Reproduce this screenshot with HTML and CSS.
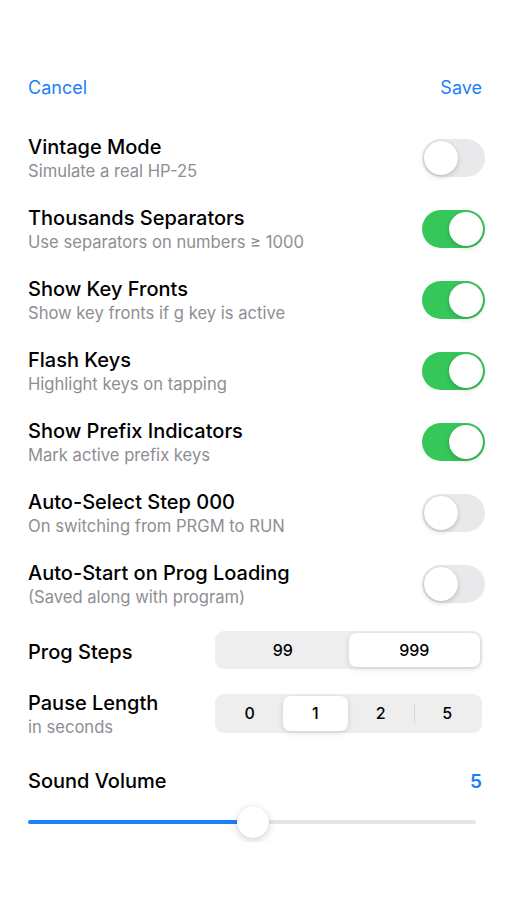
FILE: index.html
```html
<!DOCTYPE html>
<html>
<head>
	<title>Settings</title>
	<link rel="stylesheet" href="styles.css">
</head>
<body>
<div class="page">

	<div class="nav">
		<span class="nav_btn">Cancel</span>
		<span class="nav_btn">Save</span>
	</div>

	<div class="row">
		<div class="texts">
			<div class="title">Vintage Mode</div>
			<div class="sub">Simulate a real HP-25</div>
		</div>
		<div class="toggle"><div class="knob"></div></div>
	</div>

	<div class="row">
		<div class="texts">
			<div class="title">Thousands Separators</div>
			<div class="sub">Use separators on numbers &ge; 1000</div>
		</div>
		<div class="toggle on"><div class="knob"></div></div>
	</div>

	<div class="row">
		<div class="texts">
			<div class="title">Show Key Fronts</div>
			<div class="sub">Show key fronts if g key is active</div>
		</div>
		<div class="toggle on"><div class="knob"></div></div>
	</div>

	<div class="row">
		<div class="texts">
			<div class="title">Flash Keys</div>
			<div class="sub">Highlight keys on tapping</div>
		</div>
		<div class="toggle on"><div class="knob"></div></div>
	</div>

	<div class="row">
		<div class="texts">
			<div class="title">Show Prefix Indicators</div>
			<div class="sub">Mark active prefix keys</div>
		</div>
		<div class="toggle on"><div class="knob"></div></div>
	</div>

	<div class="row">
		<div class="texts">
			<div class="title">Auto-Select Step 000</div>
			<div class="sub">On switching from PRGM to RUN</div>
		</div>
		<div class="toggle"><div class="knob"></div></div>
	</div>

	<div class="row">
		<div class="texts">
			<div class="title">Auto-Start on Prog Loading</div>
			<div class="sub">(Saved along with program)</div>
		</div>
		<div class="toggle"><div class="knob"></div></div>
	</div>

	<div class="row seg_row steps_row">
		<div class="texts">
			<div class="title">Prog Steps</div>
		</div>
		<div class="segmented">
			<div class="seg">99</div>
			<div class="seg selected">999</div>
		</div>
	</div>

	<div class="row seg_row pause_row">
		<div class="texts">
			<div class="title">Pause Length</div>
			<div class="sub">in seconds</div>
		</div>
		<div class="segmented">
			<div class="seg">0</div>
			<div class="seg selected">1</div>
			<div class="seg">2</div>
			<div class="seg divided">5</div>
		</div>
	</div>

	<div class="volume">
		<div class="title">Sound Volume</div>
		<div class="volume_value">5</div>
	</div>

	<div class="slider">
		<div class="track"></div>
		<div class="fill" style="width: 225px"></div>
		<div class="thumb" style="left: 209px"></div>
	</div>

</div>
</body>
</html>
```

FILE: styles.css
```css
body
{
	margin: 0;
	background-color: #FFFFFF;
	font-family: "Inter", "Liberation Sans", sans-serif;
	color: #000000;
}
.page
{
	padding: 0 22px 0 28px;
}
.nav
{
	display: flex;
	justify-content: space-between;
	padding-top: 77px;
	height: 45px;
	padding-right: 3px;
}
.nav_btn
{
	color: #1C80F7;
	font-size: 18px;
	line-height: 22px;
}
.row
{
	display: flex;
	align-items: center;
	justify-content: space-between;
	height: 71px;
}
.texts
{
	display: flex;
	flex-direction: column;
	padding-top: 4px;
}
.title
{
	font-size: 20px;
	font-weight: 500;
	line-height: 24px;
}
.sub
{
	font-size: 16.6px;
	line-height: 25px;
	color: #8E8E93;
}
.toggle
{
	width: 63px;
	height: 38px;
	border-radius: 19px;
	background-color: #E9E9EB;
	position: relative;
	flex-shrink: 0;
}
.toggle .knob
{
	position: absolute;
	top: 2px;
	left: 2px;
	width: 34px;
	height: 34px;
	border-radius: 50%;
	background-color: #FFFFFF;
	box-shadow: 0px 2px 5px rgba(0,0,0,0.18), 0px 0px 1px rgba(0,0,0,0.15);
}
.toggle.on
{
	background-color: #35C759;
}
.toggle.on .knob
{
	left: 27px;
}
.steps_row
{
	height: 60px;
	margin-top: 1px;
}
.pause_row
{
	height: 66px;
}
.segmented
{
	display: flex;
	width: 263px;
	height: 34px;
	padding: 2px;
	border-radius: 9px;
	background-color: #EEEEEF;
	margin-right: 3px;
}
.pause_row .segmented
{
	height: 35px;
}
.seg
{
	flex: 1;
	display: flex;
	align-items: center;
	justify-content: center;
	font-size: 16px;
	font-weight: 500;
	position: relative;
}
.seg.selected
{
	background-color: #FFFFFF;
	border-radius: 7px;
	box-shadow: 0px 2px 6px rgba(0,0,0,0.12), 0px 0px 1px rgba(0,0,0,0.1);
}
.seg.divided
{
	border-left: 1px solid #D6D6D8;
	margin: 8px 0;
}
.volume
{
	display: flex;
	justify-content: space-between;
	align-items: center;
	margin-top: 20px;
	height: 30px;
	padding-right: 3px;
}
.volume_value
{
	color: #1C80F7;
	font-size: 19px;
	font-weight: 600;
}
.slider
{
	position: relative;
	height: 40px;
	margin-top: 6px;
	margin-right: 9px;
}
.track
{
	position: absolute;
	left: 0;
	right: 0;
	top: 18px;
	height: 4px;
	border-radius: 2px;
	background-color: #E5E5E7;
}
.fill
{
	position: absolute;
	left: 0;
	top: 18px;
	height: 4px;
	border-radius: 2px;
	background-color: #1C80F7;
}
.thumb
{
	position: absolute;
	top: 4px;
	width: 32px;
	height: 32px;
	border-radius: 50%;
	background-color: #FFFFFF;
	box-shadow: 0px 3px 8px rgba(0,0,0,0.16), 0px 0px 1px rgba(0,0,0,0.18);
}
```
